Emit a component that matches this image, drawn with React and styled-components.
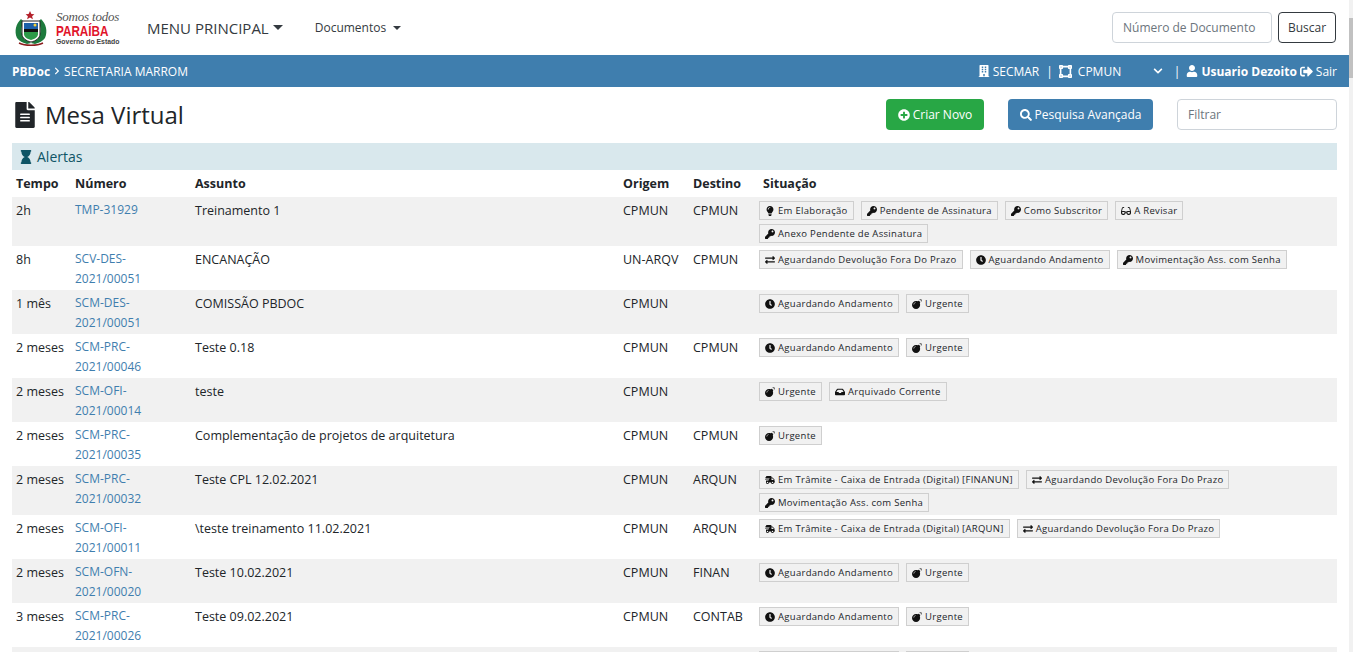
import React from 'react'
import styled, {createGlobalStyle} from 'styled-components'
import {
    FaFileAlt, FaHourglass, FaBuilding, FaVectorSquare, FaChevronDown, FaChevronRight, FaUser,
    FaSignOutAlt, FaSearch, FaPlusCircle, FaLightbulb, FaKey, FaGlasses, FaExchangeAlt,
    FaClock, FaBomb, FaInbox, FaShippingFast,
} from 'react-icons/fa'

const FONT = `"Open Sans", "Noto Sans", sans-serif`
const BLUE = '#3f7eae'

const GlobalStyle = createGlobalStyle`
  html, body { margin: 0; padding: 0; height: 100%; overflow: hidden; background: #fff; }
  body { font-family: ${FONT}; font-size: 13px; color: #212529; }
  * { box-sizing: border-box; }
`

const Frame = styled.div`
  display: flex;
  height: 652px;
  overflow: hidden;
`
const Page = styled.div`
  flex: 1;
  min-width: 0;
`
const ScrollTrack = styled.div`
  width: 4px;
  background: #f1f1f1;
  padding-top: 18px;
`
const ScrollThumb = styled.div`
  height: 60px;
  background: #c1c1c1;
`

const TopNav = styled.header`
  height: 55px;
  display: flex;
  align-items: center;
  padding: 0 13px 0 14px;
`
const Logo = styled.div`
  display: flex;
  align-items: center;
  gap: 8px;
  width: 133px;
`
const LogoText = styled.div`
  width: 53px;
  display: flex;
  flex-direction: column;
  font-family: "Liberation Sans", sans-serif;
`
const LogoSlogan = styled.span`
  font-family: "Liberation Serif", serif;
  font-style: italic;
  font-size: 13px;
  line-height: 14px;
  color: #555;
  white-space: nowrap;
  letter-spacing: -.2px;
`
const LogoName = styled.span`
  font-weight: 700;
  font-size: 15px;
  line-height: 13px;
  color: #e1142b;
  white-space: nowrap;
  transform: scaleX(.78);
  transform-origin: left center;
`
const LogoGov = styled.span`
  font-size: 8px;
  line-height: 9px;
  font-weight: 700;
  color: #444;
  white-space: nowrap;
  transform: scaleX(.86);
  transform-origin: left center;
`
const MenuMain = styled.a`
  font-size: 15px;
  color: #343a40;
  display: flex;
  align-items: center;
  white-space: nowrap;
`
const MenuDocs = styled.a`
  font-size: 12px;
  color: #343a40;
  margin-left: 32px;
  display: flex;
  align-items: center;
  white-space: nowrap;
`
const Caret = styled.i`
  display: inline-block;
  margin-left: ${p => p.$gap}px;
  border-top: ${p => p.$size}px solid #343a40;
  border-left: ${p => p.$size}px solid transparent;
  border-right: ${p => p.$size}px solid transparent;
`
const SearchForm = styled.form`
  margin-left: auto;
  display: flex;
  gap: 6px;
`
const Input = styled.input`
  width: 160px;
  height: 31px;
  border: 1px solid #ced4da;
  border-radius: 4px;
  padding: 0 10px;
  font-family: ${FONT};
  font-size: 12px;
  color: #495057;
  &::placeholder { color: #6c757d; opacity: 1; }
`
const OutlineButton = styled.button`
  width: 58px;
  height: 31px;
  border: 1px solid #343a40;
  border-radius: 4px;
  background: #fff;
  font-family: ${FONT};
  font-size: 12px;
  color: #343a40;
  padding: 0;
`

const InfoBar = styled.div`
  height: 32px;
  background: ${BLUE};
  color: #fff;
  display: flex;
  align-items: center;
  justify-content: space-between;
  padding: 0 12px;
  font-size: 12px;
  white-space: nowrap;
`
const Crumbs = styled.div`
  display: flex;
  align-items: center;
  gap: 3px;
`
const UserTools = styled.div`
  display: flex;
  align-items: center;
`
const Strong = styled.b`
  font-weight: 700;
`
const Tool = styled.span`
  display: flex;
  align-items: center;
  gap: ${p => p.$gap ?? 3}px;
  margin-left: ${p => p.$left ?? 0}px;
  width: ${p => (p.$width ? `${p.$width}px` : 'auto')};
`

const Content = styled.main`
  padding: 12px 12px 0;
`
const TitleRow = styled.div`
  display: flex;
  align-items: center;
  height: 31px;
`
const Title = styled.h1`
  margin: 0;
  display: flex;
  align-items: center;
  gap: 7px;
  font-size: 24px;
  font-weight: 500;
  color: #212529;
  margin-right: auto;
  white-space: nowrap;
`
const ActionButton = styled.button`
  height: 31px;
  width: ${p => p.$width}px;
  margin-right: ${p => p.$right}px;
  background: ${p => p.$bg};
  border: 0;
  border-radius: 4px;
  color: #fff;
  font-family: ${FONT};
  font-size: 12px;
  display: flex;
  align-items: center;
  justify-content: center;
  gap: 3px;
  white-space: nowrap;
  padding: 0;
`
const FilterInput = styled(Input)`
  padding: 0 10px;
`

const AlertBar = styled.div`
  margin-top: 13px;
  height: 27px;
  background: #d9e8ed;
  color: #0f5566;
  display: flex;
  align-items: center;
  gap: 4px;
  padding-left: 7px;
  font-size: 14px;
`
const Table = styled.table`
  width: 100%;
  table-layout: fixed;
  border-collapse: collapse;
`
const HeadCell = styled.th`
  height: 27px;
  padding: 0 0 0 4px;
  text-align: left;
  font-size: 12.5px;
  font-weight: 700;
  color: #212529;
`
const Row = styled.tr`
  background: ${p => (p.$odd ? '#f1f1f1' : '#fff')};
`
const Cell = styled.td`
  padding: 4px 4px 0;
  vertical-align: top;
  line-height: 20px;
  font-size: 12.5px;
`
const NumberCell = styled(Cell)`
  padding: 3px 30px 1px 4px;
`
const DocLink = styled.a`
  color: ${BLUE};
  font-size: 12px;
`
const ChipCell = styled.td`
  padding: 4px 0 3px;
  vertical-align: top;
`
const ChipList = styled.div`
  display: flex;
  flex-wrap: wrap;
  gap: 4px 7px;
`
const Chip = styled.span`
  height: 19px;
  display: inline-flex;
  align-items: center;
  gap: 3px;
  padding: 0 5px;
  background: #f1f1f1;
  border: 1px solid #cfcfcf;
  font-size: 9.5px;
  letter-spacing: .3px;
  color: #212529;
  white-space: nowrap;
`

function Crest() {
    return (
        <svg width="34" height="36" viewBox="0 0 34 36">
            <path d="M16 1l1.400 3 3 .2-2.300 2 .8 3-2.900-1.600-2.900 1.600.8-3-2.300-2 3-.2z" fill="#b3202a" />
            <path d="M7 9C2 14 0 21 3 28c2 3 6 5 10 6l4-1-3-2C8 29 6 22 9 11z" fill="#1d7a3d" />
            <path d="M27 9c5 5 7 12 4 19-2 3-6 5-10 6l-4-1 3-2c6-2 8-9 5-20z" fill="#1d7a3d" />
            <path d="M8 11h18v13c0 4-4 7-9 8-5-1-9-4-9-8z" fill="#fff" stroke="#222" strokeWidth="1" />
            <rect x="10" y="13" width="14" height="6" fill="#1c5fa8" />
            <rect x="10" y="19" width="14" height="3" fill="#111" />
            <path d="M10 22h14v2c0 3-3 5-7 6-4-1-7-3-7-6z" fill="#2c9a48" />
            <circle cx="21" cy="15" r="1.500" fill="#f4d13d" />
            <path d="M5 33c6 3 18 3 24 0" stroke="#8a1c1c" strokeWidth="1.500" fill="none" />
        </svg>
    )
}

const CHIPS = {
    elab: [FaLightbulb, 'Em Elaboração'],
    pend: [FaKey, 'Pendente de Assinatura'],
    subs: [FaKey, 'Como Subscritor'],
    rev: [FaGlasses, 'A Revisar'],
    anexo: [FaKey, 'Anexo Pendente de Assinatura'],
    devol: [FaExchangeAlt, 'Aguardando Devolução Fora Do Prazo'],
    and: [FaClock, 'Aguardando Andamento'],
    mov: [FaKey, 'Movimentação Ass. com Senha'],
    urg: [FaBomb, 'Urgente'],
    arq: [FaInbox, 'Arquivado Corrente'],
    finan: [FaShippingFast, 'Em Trâmite - Caixa de Entrada (Digital) [FINANUN]'],
    arqun: [FaShippingFast, 'Em Trâmite - Caixa de Entrada (Digital) [ARQUN]'],
}

const rows = [
    ['2h', 'TMP-31929', 'Treinamento 1', 'CPMUN', 'CPMUN', ['elab', 'pend', 'subs', 'rev', 'anexo']],
    ['8h', 'SCV-DES-2021/00051', 'ENCANAÇÃO', 'UN-ARQV', 'CPMUN', ['devol', 'and', 'mov']],
    ['1 mês', 'SCM-DES-2021/00051', 'COMISSÃO PBDOC', 'CPMUN', '', ['and', 'urg']],
    ['2 meses', 'SCM-PRC-2021/00046', 'Teste 0.18', 'CPMUN', 'CPMUN', ['and', 'urg']],
    ['2 meses', 'SCM-OFI-2021/00014', 'teste', 'CPMUN', '', ['urg', 'arq']],
    ['2 meses', 'SCM-PRC-2021/00035', 'Complementação de projetos de arquitetura', 'CPMUN', 'CPMUN', ['urg']],
    ['2 meses', 'SCM-PRC-2021/00032', 'Teste CPL 12.02.2021', 'CPMUN', 'ARQUN', ['finan', 'devol', 'mov']],
    ['2 meses', 'SCM-OFI-2021/00011', '\\teste treinamento 11.02.2021', 'CPMUN', 'ARQUN', ['arqun', 'devol']],
    ['2 meses', 'SCM-OFN-2021/00020', 'Teste 10.02.2021', 'CPMUN', 'FINAN', ['and', 'urg']],
    ['3 meses', 'SCM-PRC-2021/00026', 'Teste 09.02.2021', 'CPMUN', 'CONTAB', ['and', 'urg']],
    ['', '', '', '', '', ['and', 'urg']],
]

export default function App() {
    return (
        <Frame>
            <GlobalStyle />
            <Page>
                <TopNav>
                    <Logo>
                        <Crest />
                        <LogoText>
                            <LogoSlogan>Somos todos</LogoSlogan>
                            <LogoName>PARAÍBA</LogoName>
                            <LogoGov>Governo do Estado</LogoGov>
                        </LogoText>
                    </Logo>
                    <MenuMain>MENU PRINCIPAL<Caret $gap={4} $size={5} /></MenuMain>
                    <MenuDocs>Documentos<Caret $gap={7} $size={4} /></MenuDocs>
                    <SearchForm>
                        <Input placeholder="Número de Documento" />
                        <OutlineButton type="button">Buscar</OutlineButton>
                    </SearchForm>
                </TopNav>
                <InfoBar>
                    <Crumbs>
                        <Strong>PBDoc</Strong>
                        <FaChevronRight size={8} />
                        <span>SECRETARIA MARROM</span>
                    </Crumbs>
                    <UserTools>
                        <Tool><FaBuilding size={12} />SECMAR</Tool>
                        <Tool $left={7}>|</Tool>
                        <Tool $left={6} $gap={6} $width={94}><FaVectorSquare size={13} />CPMUN</Tool>
                        <FaChevronDown size={10} />
                        <Tool $left={11}>|</Tool>
                        <Tool $left={6}><FaUser size={12} /><Strong>Usuario Dezoito</Strong></Tool>
                        <Tool $left={3}><FaSignOutAlt size={13} />Sair</Tool>
                    </UserTools>
                </InfoBar>
                <Content>
                    <TitleRow>
                        <Title><FaFileAlt size={26} />Mesa Virtual</Title>
                        <ActionButton $bg="#28a745" $width={98} $right={24}><FaPlusCircle size={12} />Criar Novo</ActionButton>
                        <ActionButton $bg={BLUE} $width={145} $right={24}><FaSearch size={12} />Pesquisa Avançada</ActionButton>
                        <FilterInput placeholder="Filtrar" />
                    </TitleRow>
                    <AlertBar><FaHourglass size={14} />Alertas</AlertBar>
                    <Table>
                        <colgroup>
                            <col width="59" />
                            <col width="120" />
                            <col width="428" />
                            <col width="70" />
                            <col width="70" />
                            <col />
                        </colgroup>
                        <thead>
                            <tr>
                                <HeadCell>Tempo</HeadCell>
                                <HeadCell>Número</HeadCell>
                                <HeadCell>Assunto</HeadCell>
                                <HeadCell>Origem</HeadCell>
                                <HeadCell>Destino</HeadCell>
                                <HeadCell>Situação</HeadCell>
                            </tr>
                        </thead>
                        <tbody>
                            {rows.map((row, index) => (
                                <Row key={index} $odd={index % 2 === 0}>
                                    <Cell>{row[0]}</Cell>
                                    <NumberCell><DocLink>{row[1]}</DocLink></NumberCell>
                                    <Cell>{row[2]}</Cell>
                                    <Cell>{row[3]}</Cell>
                                    <Cell>{row[4]}</Cell>
                                    <ChipCell>
                                        <ChipList>
                                            {row[5].map(key => {
                                                const [Icon, label] = CHIPS[key]
                                                return <Chip key={key}><Icon size={10} color="#111" />{label}</Chip>
                                            })}
                                        </ChipList>
                                    </ChipCell>
                                </Row>
                            ))}
                        </tbody>
                    </Table>
                </Content>
            </Page>
            <ScrollTrack><ScrollThumb /></ScrollTrack>
        </Frame>
    )
}
